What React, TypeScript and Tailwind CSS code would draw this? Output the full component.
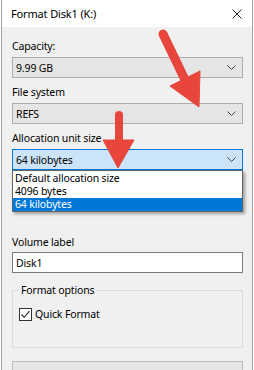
import React from "react";

const Chevron = () => (
  <svg width="9" height="5" viewBox="0 0 9 5" className="shrink-0">
    <path d="M0.5 0.5 L4.5 4.5 L8.5 0.5" fill="none" stroke="#444" strokeWidth="1" />
  </svg>
);

const Combo = ({ value, active }: { value: string; active?: boolean }) => (
  <div
    className={
      "h-[21px] shrink-0 flex items-center justify-between pl-[3px] pr-[6px] border " +
      (active ? "bg-[#cce4f7] border-[#0078d7]" : "bg-[#e5e5e5] border-[#adadad]")
    }
  >
    <span className="leading-[16px] text-black">{value}</span>
    <Chevron />
  </div>
);

export default function App() {
  return (
    <div
      className="relative w-[254px] h-[370px] overflow-hidden bg-white text-[10.5px] tracking-[-0.15px]"
      style={{ fontFamily: '"Noto Sans", "Open Sans", sans-serif' }}
    >
      <div className="ml-[1px] w-[252px] h-[370px] overflow-hidden border-x border-[#a0a0a0] flex flex-col">
        {/* title bar */}
        <div className="h-[27px] shrink-0 bg-white flex items-center justify-between pl-[9px] pr-[10px]">
          <span className="text-[11px] leading-[16px] text-black">Format Disk1 (K:)</span>
          <svg width="10" height="10" viewBox="0 0 10 10">
            <path d="M0.5 0.5 L9.5 9.5 M9.5 0.5 L0.5 9.5" stroke="#222" strokeWidth="1" />
          </svg>
        </div>
        {/* body */}
        <div className="flex-1 shrink-0 bg-[#f0f0f0] pt-[11px] pl-[10px] pr-[9px] flex flex-col leading-[16px] text-black">
          <div className="shrink-0">Capacity:</div>
          <div className="mt-[3px] shrink-0">
            <Combo value="9.99 GB" />
          </div>
          <div className="mt-[6px] shrink-0">File system</div>
          <div className="mt-[3px] shrink-0">
            <Combo value="REFS" />
          </div>
          <div className="mt-[6px] shrink-0">Allocation unit size</div>
          <div className="mt-[3px] relative shrink-0">
            <Combo value="64 kilobytes" active />
            <div className="absolute left-0 right-0 top-[21px] z-10 bg-white border border-[#646464] shadow-[2px_2px_3px_rgba(0,0,0,0.35)] flex flex-col leading-[13px]">
              <div className="h-[14px] pl-[2px] flex items-center">Default allocation size</div>
              <div className="h-[13px] pl-[2px] flex items-center">4096 bytes</div>
              <div className="h-[13px] pl-[2px] flex items-center bg-[#0078d7] text-white">64 kilobytes</div>
            </div>
          </div>
          <div className="mt-[64px] shrink-0">Volume label</div>
          <div className="mt-[2px] h-[21px] shrink-0 bg-white border border-[#7a7a7a] flex items-center pl-[3px]">
            Disk1
          </div>
          <fieldset className="mt-[9px] h-[66px] shrink-0 border border-[#dcdcdc] pl-[6px]">
            <legend className="px-[2px]">Format options</legend>
            <div className="mt-[8px] flex items-center gap-[3px]">
              <div className="w-[13px] h-[13px] bg-white border border-[#333] flex items-center justify-center">
                <svg width="11" height="11" viewBox="0 0 11 11">
                  <path d="M1.5 5.5 L4.2 8.3 L9.5 2.2" fill="none" stroke="#222" strokeWidth="1.1" />
                </svg>
              </div>
              <span>Quick Format</span>
            </div>
          </fieldset>
          <div className="mt-[13px] h-[20px] shrink-0 bg-[#e6e6e6] border border-[#bcbcbc]" />
        </div>
      </div>
      {/* red annotation arrows */}
      <svg
        className="absolute left-0 top-0 pointer-events-none z-20"
        width="254"
        height="370"
        viewBox="0 0 254 370"
      >
        <g fill="#e8453c" stroke="#e8453c">
          <line x1="163" y1="34" x2="187" y2="84" strokeWidth="9" strokeLinecap="round" />
          <polygon points="200,71 170,86 199,107" strokeWidth="1" strokeLinejoin="round" />
          <line x1="119" y1="115" x2="119" y2="143" strokeWidth="8" strokeLinecap="round" />
          <polygon points="103,140 134,140 118,168" strokeWidth="1" strokeLinejoin="round" />
        </g>
      </svg>
    </div>
  );
}
